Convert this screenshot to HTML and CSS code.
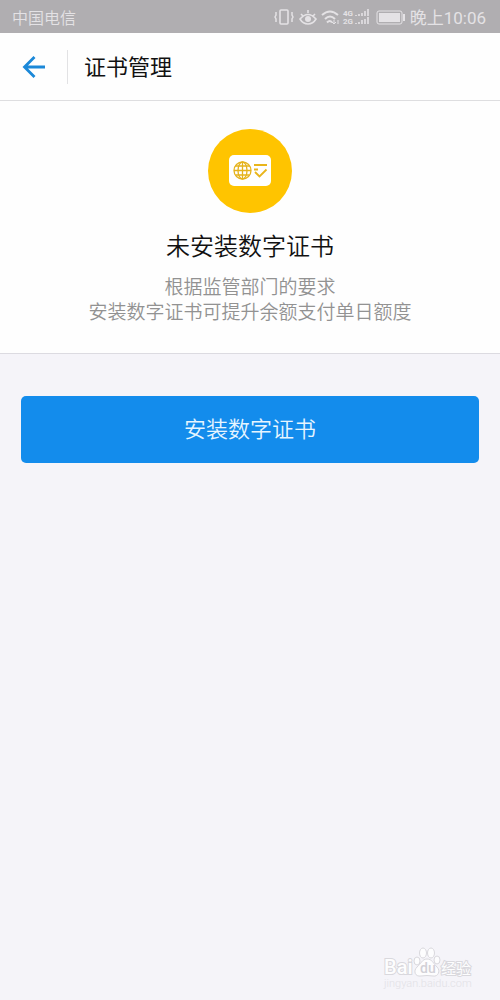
FILE: index.html
```html
<!DOCTYPE html>
<html lang="zh-CN">
<head>
<meta charset="utf-8">
<meta name="viewport" content="width=device-width, initial-scale=1">
<title>证书管理</title>
<link rel="stylesheet" href="styles.css">
</head>
<body>
<div class="status">
  <span>中国电信</span>
  <div class="status-right">
    <svg class="status-icons" width="132" height="20" viewBox="0 0 132 20" fill="none" stroke="currentColor" aria-hidden="true">
      <rect x="6" y="3" width="8" height="14" rx="1" stroke-width="1.6"/>
      <path d="M2 5v3l-1 2 1 2v3M18 5v3l1 2-1 2v3" stroke-width="1.5"/>
      <path d="M26 12q8-9 16 0q-3 5-8 5t-8-5zM27 7l2 2M34 3v3M41 7l-2 2" stroke-width="1.6"/>
      <circle cx="34" cy="12" r="3" fill="currentColor" stroke="none"/>
      <path d="M48 8q8-7 16 0M51 12q5-5 10 0M53 15.5q3-3 5 0" stroke-width="2"/>
      <path d="M60 13v4m-2-2l2 2 2-2M64 17v-4" stroke-width="1"/>
      <path d="M82 9V8M85 9V7M88 9V6M91 9V4M94 9V2M82 17v-1M85 17v-2M88 17v-4M91 17v-5M94 17v-7" stroke-width="1.6"/>
      <text class="network" x="69" y="9">4G</text>
      <text class="network" x="69" y="17">2G</text>
      <rect x="103" y="4" width="25" height="13" rx="2" stroke-width="1"/>
      <rect x="105" y="6" width="21" height="9" fill="currentColor" stroke="none"/>
      <path d="M130 7v7" stroke-width="2"/>
    </svg>
    <span class="time">晚上10:06</span>
  </div>
</div>
<header class="bar">
  <button class="back" type="button" aria-label="返回">
    <svg width="24" height="24" viewBox="0 0 24 24" fill="none" stroke="currentColor" stroke-width="2.8" aria-hidden="true"><path d="M12.5 2L2.5 12l10 10M2.5 12H23"/></svg>
  </button>
  <h1 class="title">证书管理</h1>
</header>
<main class="main">
  <section class="state">
    <svg class="badge" width="84" height="84" viewBox="0 0 84 84" fill="none" stroke="#ffc400" aria-hidden="true">
      <circle cx="42" cy="42" r="42" fill="#ffc400" stroke="none"/>
      <rect x="21" y="26" width="42" height="31" rx="5" fill="#fff" stroke="none"/>
      <g stroke="#e5b31c" stroke-width="1.3">
        <circle cx="34.5" cy="41.5" r="8.5"/>
        <ellipse cx="34.5" cy="41.5" rx="4.5" ry="8.5"/>
        <path d="M34.5 33v17M26 41.5h17M27.5 37h14M27.5 46h14"/>
      </g>
      <path d="M46 36h13M46 40.5h4M47 43l4.5 4.5 7-7" stroke="#e9b51b" stroke-width="1.8"/>
    </svg>
    <h2 class="headline">未安装数字证书</h2>
    <p class="hint">根据监管部门的要求<br>安装数字证书可提升余额支付单日额度</p>
  </section>
  <div class="actions">
    <button class="install" type="button">安装数字证书</button>
  </div>
</main>
<footer class="footer">
  <svg width="92" height="46" viewBox="0 0 92 46" role="img" aria-label="Baidu 经验">
    <g class="mark">
      <text class="mark-name" x="1" y="28">Bai</text>
      <ellipse cx="34" cy="15" rx="3" ry="4"/>
      <ellipse cx="40" cy="7" rx="3.5" ry="5"/>
      <ellipse cx="48" cy="7" rx="3.5" ry="5"/>
      <ellipse cx="54" cy="14" rx="3" ry="4"/>
      <path d="M44 13c5 0 6 4 10 8 4 4 1 10-4 9q-6-1-12 0c-6 1-8-5-4-9 4-3 5-8 10-8z"/>
      <text class="mark-du" x="37" y="27">du</text>
      <text class="mark-cjk" x="58" y="28">经验</text>
      <text class="mark-url" x="1" y="41">jingyan.baidu.com</text>
    </g>
  </svg>
</footer>
</body>
</html>
```
FILE: styles.css
```css
* {
  box-sizing: border-box;
}

body {
  margin: 0;
  min-height: 100vh;
  display: flex;
  flex-direction: column;
  background: #f5f4f9;
  color: #111;
  font-family: Roboto, "Noto Sans CJK SC", sans-serif;
  font-weight: 350;
}

.status {
  display: flex;
  align-items: center;
  justify-content: space-between;
  height: 33px;
  padding: 0 14px 0 12px;
  background: #b0aeb1;
  color: #e4e2e5;
  font-size: 16px;
}

.status-right {
  display: flex;
  align-items: center;
  gap: 4px;
}

.time {
  font-size: 17px;
  font-weight: 400;
}

.status-icons {
  display: block;
}

.network {
  fill: currentColor;
  stroke: none;
  font-size: 8px;
  font-weight: 700;
}

.bar {
  display: flex;
  align-items: center;
  height: 68px;
  background: #fefefe;
  border-bottom: 1px solid #dedee0;
}

.back {
  display: flex;
  align-items: center;
  justify-content: center;
  width: 68px;
  height: 34px;
  padding: 0;
  border: 0;
  border-right: 1px solid #e2e2e4;
  background: none;
  color: #1b88d8;
}

.title {
  margin: 0 16px;
  padding-top: 2px;
  font-size: 22px;
  font-weight: 400;
  line-height: 32px;
}

.state {
  display: flex;
  flex-direction: column;
  align-items: center;
  padding: 28px 16px;
  background: #fefefe;
  border-bottom: 1px solid #dcdbe1;
  text-align: center;
}

.badge {
  display: block;
}

.headline {
  margin: 17px 0 11px;
  font-size: 24px;
  font-weight: 350;
  line-height: 34px;
}

.hint {
  margin: 0;
  color: #929292;
  font-size: 19px;
  line-height: 25px;
}

.actions {
  padding: 42px 21px;
}

.install {
  display: block;
  width: 100%;
  padding: 17px;
  border: 0;
  border-radius: 5px;
  background: #138cec;
  color: #e6f5ff;
  font: inherit;
  font-size: 22px;
  line-height: 33px;
}

.footer {
  display: flex;
  justify-content: flex-end;
  margin-top: auto;
  padding: 0 25px 8px;
}

.mark {
  fill: #fdfdfe;
  stroke: #d9d8dd;
  stroke-width: 1px;
}

.mark-name {
  font-size: 20px;
  font-weight: 500;
  stroke-width: 2px;
  paint-order: stroke;
}

.mark-du {
  fill: #d2d1d7;
  stroke: none;
  font-size: 14px;
  font-weight: 500;
}

.mark-cjk {
  font-size: 15px;
  font-weight: 400;
  stroke-width: 2px;
  paint-order: stroke;
}

.mark-url {
  fill: #e2e1e6;
  stroke: none;
  font-size: 11px;
}
```
